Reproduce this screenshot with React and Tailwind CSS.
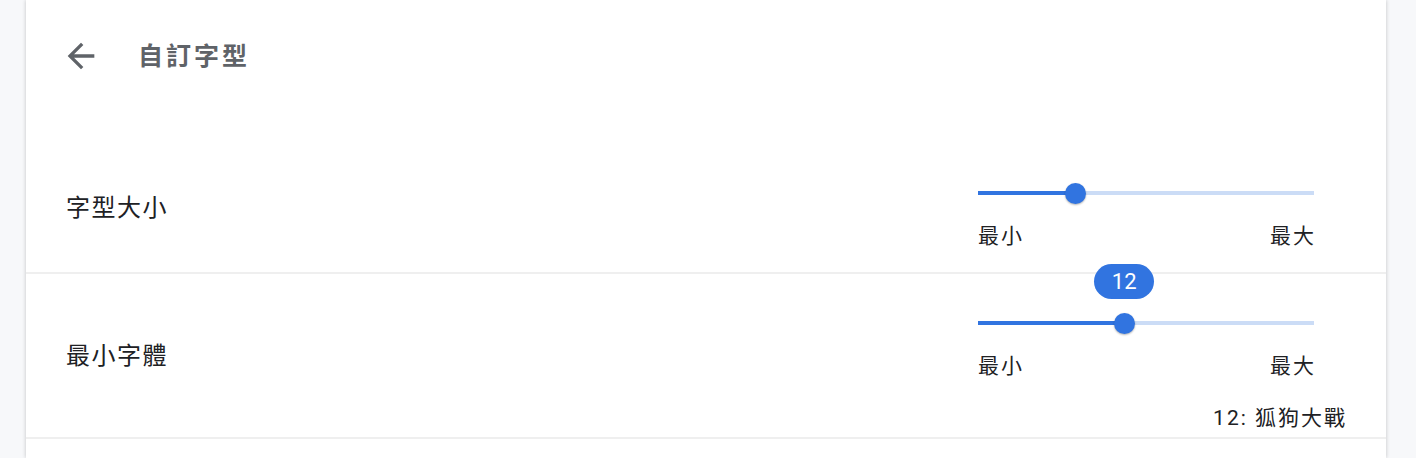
import React from "react";

const FONT = { fontFamily: 'Roboto, "Noto Sans CJK TC", sans-serif' };

const BackArrow = () => (
  <svg viewBox="0 0 24 24" className="w-[40px] h-[40px] fill-[#5f6368]">
    <path d="M20 11H7.83l5.59-5.59L12 4l-8 8 8 8 1.41-1.41L7.83 13H20v-2z" />
  </svg>
);

const Slider = ({ percent, bubble }) => (
  <div className="w-[336px]">
    {/* TRACK */}
    <div className="relative h-[20px] flex items-center">
      <div className="w-full h-[4px] bg-[#cbdcf6]" />
      <div
        className="absolute left-0 h-[4px] bg-[#3174e0]"
        style={{ width: `${percent}%` }}
      />
      <div
        className="absolute w-[21px] h-[21px] -ml-[10px] rounded-full bg-[#3174e0] shadow-[0_1px_2px_rgba(0,0,0,0.3)]"
        style={{ left: `${percent}%` }}
      />
      {bubble && (
        <div
          className="absolute -top-[49px] -ml-[30px] w-[60px] h-[35px] rounded-full bg-[#3174e0] text-white text-[22px] flex items-center justify-center"
          style={{ left: `${percent}%` }}
        >
          {bubble}
        </div>
      )}
    </div>
    {/* LABELS */}
    <div className="mt-[21px] flex justify-between text-[21px] leading-[24px] tracking-[2px] text-[#202124]">
      <span>最小</span>
      <span className="-mr-[2px]">最大</span>
    </div>
  </div>
);

export default function App() {
  return (
    <div className="min-h-screen bg-[#f7f8fa]" style={FONT}>
      <div className="ml-[26px] w-[1360px] h-[458px] bg-white shadow-[0_0_4px_rgba(0,0,0,0.22)]">
        {/* HEADER */}
        <div className="h-[112px] flex items-center pl-[35px]">
          <BackArrow />
          <h1 className="ml-[37px] mt-[2px] text-[25px] font-semibold tracking-[3px] text-[#5f6368]">
            自訂字型
          </h1>
        </div>

        <div className="pt-[31px]">
          {/* FONT SIZE */}
          <div className="flex items-center justify-between pl-[40px] pr-[41px]">
            <span className="text-[24px] tracking-[1.5px] text-[#202124]">
              字型大小
            </span>
            <div className="w-[367px] pt-[40px] pb-[24px]">
              <Slider percent={29} />
            </div>
          </div>

          <div className="h-[2px] bg-[#efefef]" />

          {/* MINIMUM FONT */}
          <div className="flex items-center justify-between pl-[40px] pr-[41px]">
            <span className="text-[24px] tracking-[1.5px] text-[#202124]">
              最小字體
            </span>
            <div className="w-[367px] pt-[39px] pb-[5px] flex flex-col">
              <Slider percent={43.5} bubble="12" />
              <div className="mt-[26px] self-end text-[21px] leading-[28px] tracking-[2px] -mr-[2px] text-[#202124]">
                12: 狐狗大戰
              </div>
            </div>
          </div>

          <div className="h-[2px] bg-[#efefef]" />
        </div>
      </div>
    </div>
  );
}
